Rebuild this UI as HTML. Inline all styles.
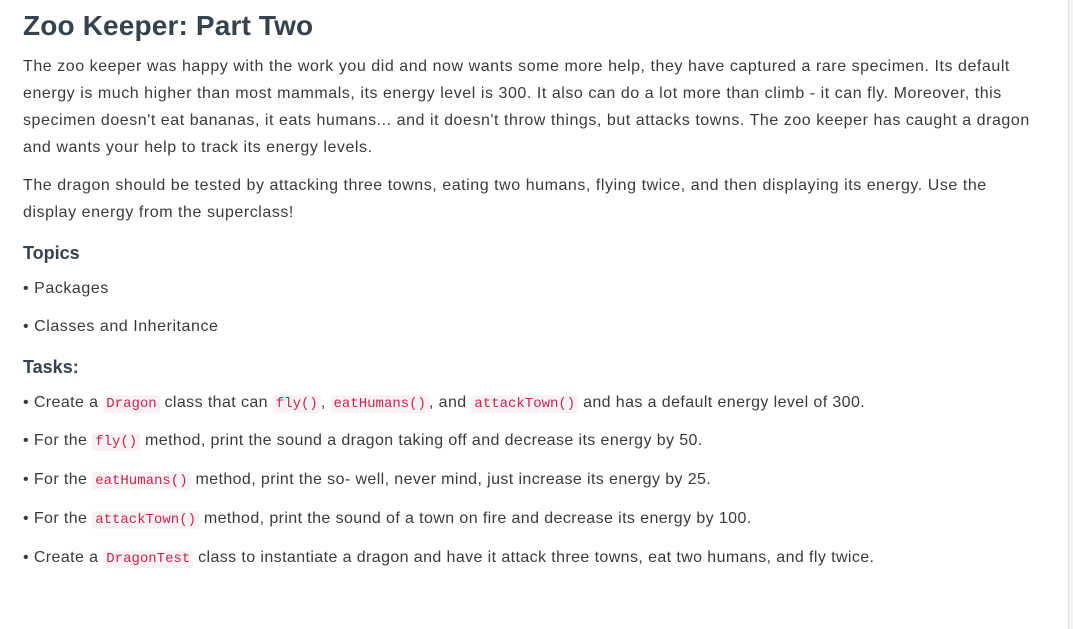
<!DOCTYPE html>
<html><head><meta charset="utf-8"><style>
html,body{margin:0;padding:0;background:#fff;width:1073px;height:629px;overflow:hidden}
body{font-family:"Liberation Sans",sans-serif;color:#3a3a3a;position:relative}
.edge{position:absolute;left:1068px;top:0;width:5px;height:629px;background:#f3f4f6;border-left:1px solid #e2e4e8}
.c{position:absolute;left:23px;top:0;width:1040px}
h1{position:absolute;top:10px;left:0;margin:0;font-size:28px;font-weight:bold;color:#36434f;letter-spacing:0.15px;white-space:nowrap}
.l{position:absolute;left:0;font-size:16px;letter-spacing:0.55px;white-space:nowrap;line-height:20px}
.b{letter-spacing:0.4px}
h3{position:absolute;left:0;margin:0;font-size:18px;font-weight:bold;color:#36434f;line-height:20px}
code{font-family:"Liberation Mono",monospace;font-size:14px;color:#c7254e;background:#f9f2f4;border-radius:3px;padding:1px 3px;letter-spacing:0}
</style></head><body>
<div class="edge"></div>
<div class="c">
<h1>Zoo Keeper: Part Two</h1>
<div class="l" style="top:57px">The zoo keeper was happy with the work you did and now wants some more help, they have captured a rare specimen. Its default</div>
<div class="l" style="top:84px">energy is much higher than most mammals, its energy level is 300. It also can do a lot more than climb - it can fly. Moreover, this</div>
<div class="l" style="top:111px">specimen doesn't eat bananas, it eats humans... and it doesn't throw things, but attacks towns. The zoo keeper has caught a dragon</div>
<div class="l" style="top:138px">and wants your help to track its energy levels.</div>
<div class="l" style="top:176px">The dragon should be tested by attacking three towns, eating two humans, flying twice, and then displaying its energy. Use the</div>
<div class="l" style="top:203px">display energy from the superclass!</div>
<h3 style="top:243px">Topics</h3>
<div class="l" style="top:279px">• Packages</div>
<div class="l" style="top:317px">• Classes and Inheritance</div>
<h3 style="top:357px">Tasks:</h3>
<div class="l b" style="top:393px">• Create a <code>Dragon</code> class that can <code>fly()</code>, <code>eatHumans()</code>, and <code>attackTown()</code> and has a default energy level of 300.</div>
<div class="l b" style="top:431px">• For the <code>fly()</code> method, print the sound a dragon taking off and decrease its energy by 50.</div>
<div class="l b" style="top:470px">• For the <code>eatHumans()</code> method, print the so- well, never mind, just increase its energy by 25.</div>
<div class="l b" style="top:509px">• For the <code>attackTown()</code> method, print the sound of a town on fire and decrease its energy by 100.</div>
<div class="l b" style="top:548px">• Create a <code>DragonTest</code> class to instantiate a dragon and have it attack three towns, eat two humans, and fly twice.</div>
</div>
</body></html>
